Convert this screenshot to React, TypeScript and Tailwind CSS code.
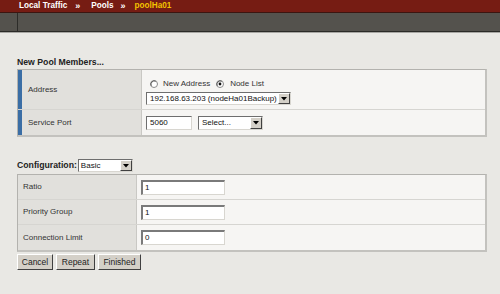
import React from "react";

const font = { fontFamily: '"Liberation Sans", Arial, sans-serif' };

function Radio({ checked }: { checked?: boolean }) {
  return (
    <svg width="8" height="8" viewBox="0 0 8 8" className="shrink-0">
      <circle cx="4" cy="4" r="3.5" fill="#ffffff" stroke="#8a8a8a" strokeWidth="1" />
      <path d="M1.2 5.8 A3.5 3.5 0 0 1 5.8 1.2" fill="none" stroke="#5a5a5a" strokeWidth="1" />
      {checked && <circle cx="4" cy="4" r="1.4" fill="#111111" />}
    </svg>
  );
}

function Arrow() {
  return (
    <div className="w-[12px] h-full bg-[#d4d0c8] border-t border-l border-t-white border-l-white border-b border-r border-b-[#404040] border-r-[#404040] flex items-center justify-center shrink-0">
      <svg width="6" height="4" viewBox="0 0 6 4">
        <path d="M0 0 H6 L3 3.5 Z" fill="#000" />
      </svg>
    </div>
  );
}

function Select({ text, w }: { text: string; w: string }) {
  return (
    <div className={`${w} h-[13px] bg-white border border-t-[#6e6e6e] border-l-[#6e6e6e] border-b-[#d8d6d0] border-r-[#d8d6d0] flex items-stretch`}>
      <div className="flex-1 text-[8px] leading-[11px] text-[#111] pl-[3px] whitespace-nowrap overflow-hidden">{text}</div>
      <Arrow />
    </div>
  );
}

function Input({ value, w }: { value: string; w: string }) {
  return (
    <div className={`${w} h-[15px] bg-white border-t-2 border-l-2 border-t-[#7a7a7a] border-l-[#7a7a7a] border-b border-r border-b-[#d8d6d0] border-r-[#d8d6d0] text-[8px] leading-[12px] text-[#111] pl-[2px]`}>
      {value}
    </div>
  );
}

function Button({ label, w }: { label: string; w: string }) {
  return (
    <div className={`${w} h-[16px] bg-[#d4d0c8] border border-t-white border-l-white border-b-[#404040] border-r-[#404040] flex items-center justify-center text-[8.5px] text-[#222]`}>
      {label}
    </div>
  );
}

export default function App() {
  return (
    <div style={font} className="w-[500px] h-[294px] bg-[#e9e8e4] overflow-hidden">
      {/* header */}
      <div className="h-[12px] bg-[#761c13] flex items-center pl-[19px] text-[8.2px] font-bold text-white leading-[12px] whitespace-nowrap">
        <span>Local Traffic</span>
        <span className="ml-[8px] mr-[11px] text-[9px]">»</span>
        <span>Pools</span>
        <span className="ml-[7px] mr-[9px] text-[9px]">»</span>
        <span className="text-[#f2c200]">poolHa01</span>
      </div>
      <div className="h-[1px] bg-[#3c1510]" />
      <div className="h-[18px] bg-[#54524d] flex">
        <div className="ml-[17px] w-[1px] h-full bg-[#2d2c29]" />
      </div>
      <div className="h-[1px] bg-[#2b2a27]" />
      <div className="h-[1px] bg-[#a8a7a3]" />

      <div className="pl-[17px] pr-[13px]">
        <div className="mt-[23px] h-[12px] text-[8.7px] font-bold text-[#222] leading-[12px]">New Pool Members...</div>

        <div className="mt-[1px] border border-[#b3b2ae] border-r-2 border-b-2 border-r-[#c3c2be] border-b-[#c3c2be] bg-[#f6f5f3]">
          <div className="flex h-[40px] border-b border-[#d6d5d1]">
            <div className="w-[4px] bg-[#3b6ea5]" />
            <div className="w-[120px] bg-[#e1e0dc] border-r border-[#c9c8c4] flex items-center pl-[6px] text-[8px] text-[#333]">Address</div>
            <div className="flex-1 pl-[4px] pt-[8px]">
              <div className="flex items-center h-[12px] text-[8px] text-[#333]">
                <span className="ml-[4px]"><Radio /></span>
                <span className="ml-[5px]">New Address</span>
                <span className="ml-[6px]"><Radio checked /></span>
                <span className="ml-[6px]">Node List</span>
              </div>
              <div className="mt-[2px]">
                <Select text="192.168.63.203 (nodeHa01Backup)" w="w-[145px]" />
              </div>
            </div>
          </div>
          <div className="flex h-[25px]">
            <div className="w-[4px] bg-[#3b6ea5]" />
            <div className="w-[120px] bg-[#e1e0dc] border-r border-[#c9c8c4] flex items-center pl-[6px] text-[8px] text-[#333]">Service Port</div>
            <div className="flex-1 pl-[4px] flex items-center gap-[6px]">
              <div className="w-[46px] h-[14px] bg-white border border-t-[#6e6e6e] border-l-[#6e6e6e] border-b-[#d8d6d0] border-r-[#d8d6d0] text-[8px] leading-[12px] text-[#111] pl-[3px]">5060</div>
              <div className="w-[65px]">
                <div className="h-[14px] bg-white border border-t-[#6e6e6e] border-l-[#6e6e6e] border-b-[#d8d6d0] border-r-[#d8d6d0] flex items-stretch">
                  <div className="flex-1 text-[8px] leading-[12px] text-[#111] pl-[3px]">Select...</div>
                  <Arrow />
                </div>
              </div>
            </div>
          </div>
        </div>

        <div className="mt-[20px] flex items-end h-[14px]">
          <span className="text-[8.7px] font-bold text-[#222] leading-[11px]">Configuration:</span>
          <div className="ml-[1px] w-[55px] h-[13px] bg-white border border-t-[#6e6e6e] border-l-[#6e6e6e] border-b-[#d8d6d0] border-r-[#d8d6d0] flex items-stretch mb-[-1px]">
            <div className="flex-1 text-[8px] leading-[11px] text-[#111] pl-[2px]">Basic</div>
            <Arrow />
          </div>
        </div>

        <div className="mt-[3px] border border-[#b3b2ae] border-r-2 border-b-2 border-r-[#c3c2be] border-b-[#c3c2be] bg-[#f6f5f3]">
          {[
            ["Ratio", "1", "h-[25px]"],
            ["Priority Group", "1", "h-[25px]"],
            ["Connection Limit", "0", "h-[25px]"],
          ].map(([label, val, h], i) => (
            <div key={label} className={`flex ${h} ${i < 2 ? "border-b border-[#d6d5d1]" : ""}`}>
              <div className="w-[119px] bg-[#e1e0dc] border-r border-[#c9c8c4] flex items-center pl-[5px] text-[8px] text-[#333]">{label}</div>
              <div className="flex-1 pl-[4px] flex items-center">
                <Input value={val} w="w-[84px]" />
              </div>
            </div>
          ))}
        </div>

        <div className="mt-[2px] flex gap-[3px]">
          <Button label="Cancel" w="w-[36px]" />
          <Button label="Repeat" w="w-[39px]" />
          <Button label="Finished" w="w-[43px]" />
        </div>
      </div>
    </div>
  );
}
